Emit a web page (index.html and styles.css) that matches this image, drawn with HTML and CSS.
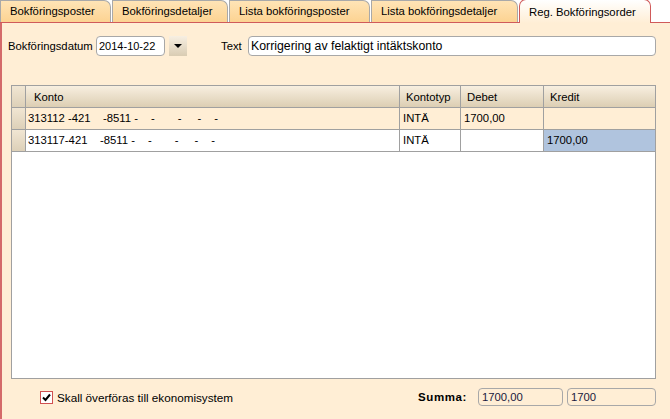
FILE: index.html
```html
<!DOCTYPE html>
<html lang="sv">
<head>
    <meta charset="UTF-8">
    <title>Reg. Bokföringsorder</title>
    <link rel="stylesheet" href="styles.css">
</head>
<body>
    <div class="tabs">
        <div class="tab tab1">Bokföringsposter</div>
        <div class="tab tab2">Bokföringsdetaljer</div>
        <div class="tab tab3">Lista bokföringsposter</div>
        <div class="tab tab4">Lista bokföringsdetaljer</div>
        <div class="tab tab5 active">Reg. Bokföringsorder</div>
    </div>
    <div class="panel">
        <div class="form-row">
            <span class="label date-label">Bokföringsdatum</span>
            <div class="input date-input">2014-10-22</div>
            <div class="drop-btn"><span class="arrow"></span></div>
            <span class="label text-label">Text</span>
            <div class="input text-input">Korrigering av felaktigt intäktskonto</div>
        </div>

        <div class="grid">
            <div class="grid-row grid-head">
                <div class="cell rowhead"></div>
                <div class="cell c-konto">Konto</div>
                <div class="cell c-typ">Kontotyp</div>
                <div class="cell c-debet">Debet</div>
                <div class="cell c-kredit">Kredit</div>
            </div>
            <div class="grid-row row-alt">
                <div class="cell rowhead"></div>
                <div class="cell c-konto"><span class="k-nr">313112 -421</span><span class="seg s1">-8511 -</span><span class="seg s2">-</span><span class="seg s3">-</span><span class="seg s4">-</span><span class="seg s5">-</span></div>
                <div class="cell c-typ">INTÄ</div>
                <div class="cell c-debet">1700,00</div>
                <div class="cell c-kredit"></div>
            </div>
            <div class="grid-row">
                <div class="cell rowhead"></div>
                <div class="cell c-konto"><span class="k-nr">313117-421</span><span class="seg s1">-8511 -</span><span class="seg s2">-</span><span class="seg s3">-</span><span class="seg s4">-</span><span class="seg s5">-</span></div>
                <div class="cell c-typ">INTÄ</div>
                <div class="cell c-debet"></div>
                <div class="cell c-kredit selected">1700,00</div>
            </div>
        </div>

        <div class="bottom-row">
            <div class="check-wrap">
                <span class="checkbox">
                    <svg width="9" height="9" viewBox="0 0 9 9"><path d="M1 4.5 L3.5 7 L8 1.5" fill="none" stroke="#000" stroke-width="2"/></svg>
                </span>
                <span class="label check-label">Skall överföras till ekonomisystem</span>
            </div>
            <span class="summa-label">Summa:</span>
            <div class="input sum-input sum1">1700,00</div>
            <div class="input sum-input sum2">1700</div>
        </div>
    </div>
</body>
</html>
```

FILE: styles.css
```css
* {
    box-sizing: border-box;
}
body {
    margin: 0;
    width: 670px;
    height: 419px;
    overflow: hidden;
    background: #ffeed5;
    font-family: "Liberation Sans", Arial, sans-serif;
    font-size: 11px;
    color: #000;
}

/* tabs */
.tabs {
    display: flex;
    align-items: flex-end;
    height: 23px;
    background: #fff;
    border-bottom: 1px solid #d05a5a;
    position: relative;
    font-size: 11.3px;
}
.tab {
    height: 22px;
    padding: 4px 0 0 9px;
    border: 1px solid #a9a9a9;
    border-bottom: none;
    border-radius: 0 7px 0 0;
    background: linear-gradient(#ffe4b6, #fcd392);
    margin-right: 1px;
    white-space: nowrap;
}
.tab1 { width: 111px; }
.tab2 { width: 116px; }
.tab3 { width: 141px; }
.tab4 { width: 147px; }
.tab.active {
    width: 132px;
    height: 24px;
    margin-bottom: -1px;
    padding: 6px 0 0 9px;
    border-color: #d05a5a;
    border-radius: 7px 7px 0 0;
    background: linear-gradient(#ffffff, #ffeed5);
}

/* panel */
.panel {
    height: 396px;
    border-left: 2px solid #d46a6a;
    padding: 13px 0 0 6px;
}
.form-row {
    display: flex;
    align-items: center;
    height: 20px;
    font-size: 11.3px;
}
.label {
    white-space: nowrap;
}
.date-label {
    width: 88px;
}
.input {
    height: 20px;
    border: 1px solid #a8a8a8;
    border-radius: 4px;
    background: #fff;
    padding: 3px 0 0 3px;
    white-space: nowrap;
    overflow: hidden;
}
.date-input {
    width: 69px;
    padding-left: 2px;
    font-size: 11px;
}
.drop-btn {
    width: 18px;
    height: 20px;
    margin-left: 4px;
    background: linear-gradient(#f7efe2, #d9ccb3);
    display: flex;
    align-items: center;
    justify-content: center;
}
.arrow {
    width: 0;
    height: 0;
    border-left: 4px solid transparent;
    border-right: 4px solid transparent;
    border-top: 4px solid #000;
}
.text-label {
    width: 27px;
    margin-left: 34px;
}
.text-input {
    width: 408px;
    padding-left: 2px;
    font-size: 12.3px;
    padding-top: 2px;
}

/* grid */
.grid {
    margin: 29px 0 0 3px;
    width: 645px;
    height: 294px;
    border: 1px solid #a0a0a0;
    background: #fff;
}
.grid-row {
    display: flex;
    height: 22px;
    border-bottom: 1px solid #a0a0a0;
}
.cell {
    height: 21px;
    padding: 4px 0 0 3px;
    border-left: 1px solid #a0a0a0;
    white-space: nowrap;
    overflow: hidden;
    font-size: 11.3px;
}
.rowhead {
    width: 13px;
    border-left: none;
    background: linear-gradient(#f1e6d3, #ddd0b8);
}
.c-konto { width: 374px; }
.c-typ { width: 61px; }
.c-debet { width: 83px; }
.c-kredit { width: 112px; }
.grid-head {
    background: linear-gradient(#f8efe0, #dcceb3);
}
.grid-head .cell {
    padding-top: 5px;
}
.grid-head .c-konto {
    padding-left: 8px;
}
.grid-head .c-typ,
.grid-head .c-debet,
.grid-head .c-kredit {
    padding-left: 6px;
}
.grid-row .c-konto {
    padding-left: 2px;
}
.grid-head .c-konto {
    padding-left: 8px;
}
.k-nr {
    display: inline-block;
    width: 72px;
}
.seg {
    display: inline-block;
}
.s1 { margin-left: 0; }
.s2 { margin-left: 13px; }
.s3 { margin-left: 23px; }
.s4 { margin-left: 16px; }
.s5 { margin-left: 13px; }
.row-alt .k-nr {
    width: 75px;
}
.row-alt {
    background: #ffeed5;
}
.selected {
    background: #b0c4de;
}

/* bottom */
.bottom-row {
    display: flex;
    align-items: center;
    margin-top: 9px;
    height: 18px;
}
.check-wrap {
    display: flex;
    align-items: center;
    margin-left: 32px;
    width: 380px;
}
.check-label {
    font-size: 11.7px;
}
.checkbox {
    width: 13px;
    height: 13px;
    border: 1px solid #d05050;
    background: #fff;
    margin-right: 4px;
    display: flex;
    align-items: center;
    justify-content: center;
}
.summa-label {
    font-weight: bold;
    font-size: 11.5px;
    margin-left: -2px;
    letter-spacing: 0.6px;
}
.sum-input {
    height: 18px;
    padding-top: 2px;
    background: #ffeed5;
    color: #1a1a40;
    font-size: 11.3px;
}
.sum1 {
    width: 85px;
    margin-left: 11px;
}
.sum2 {
    width: 89px;
    margin-left: 4px;
}
```
